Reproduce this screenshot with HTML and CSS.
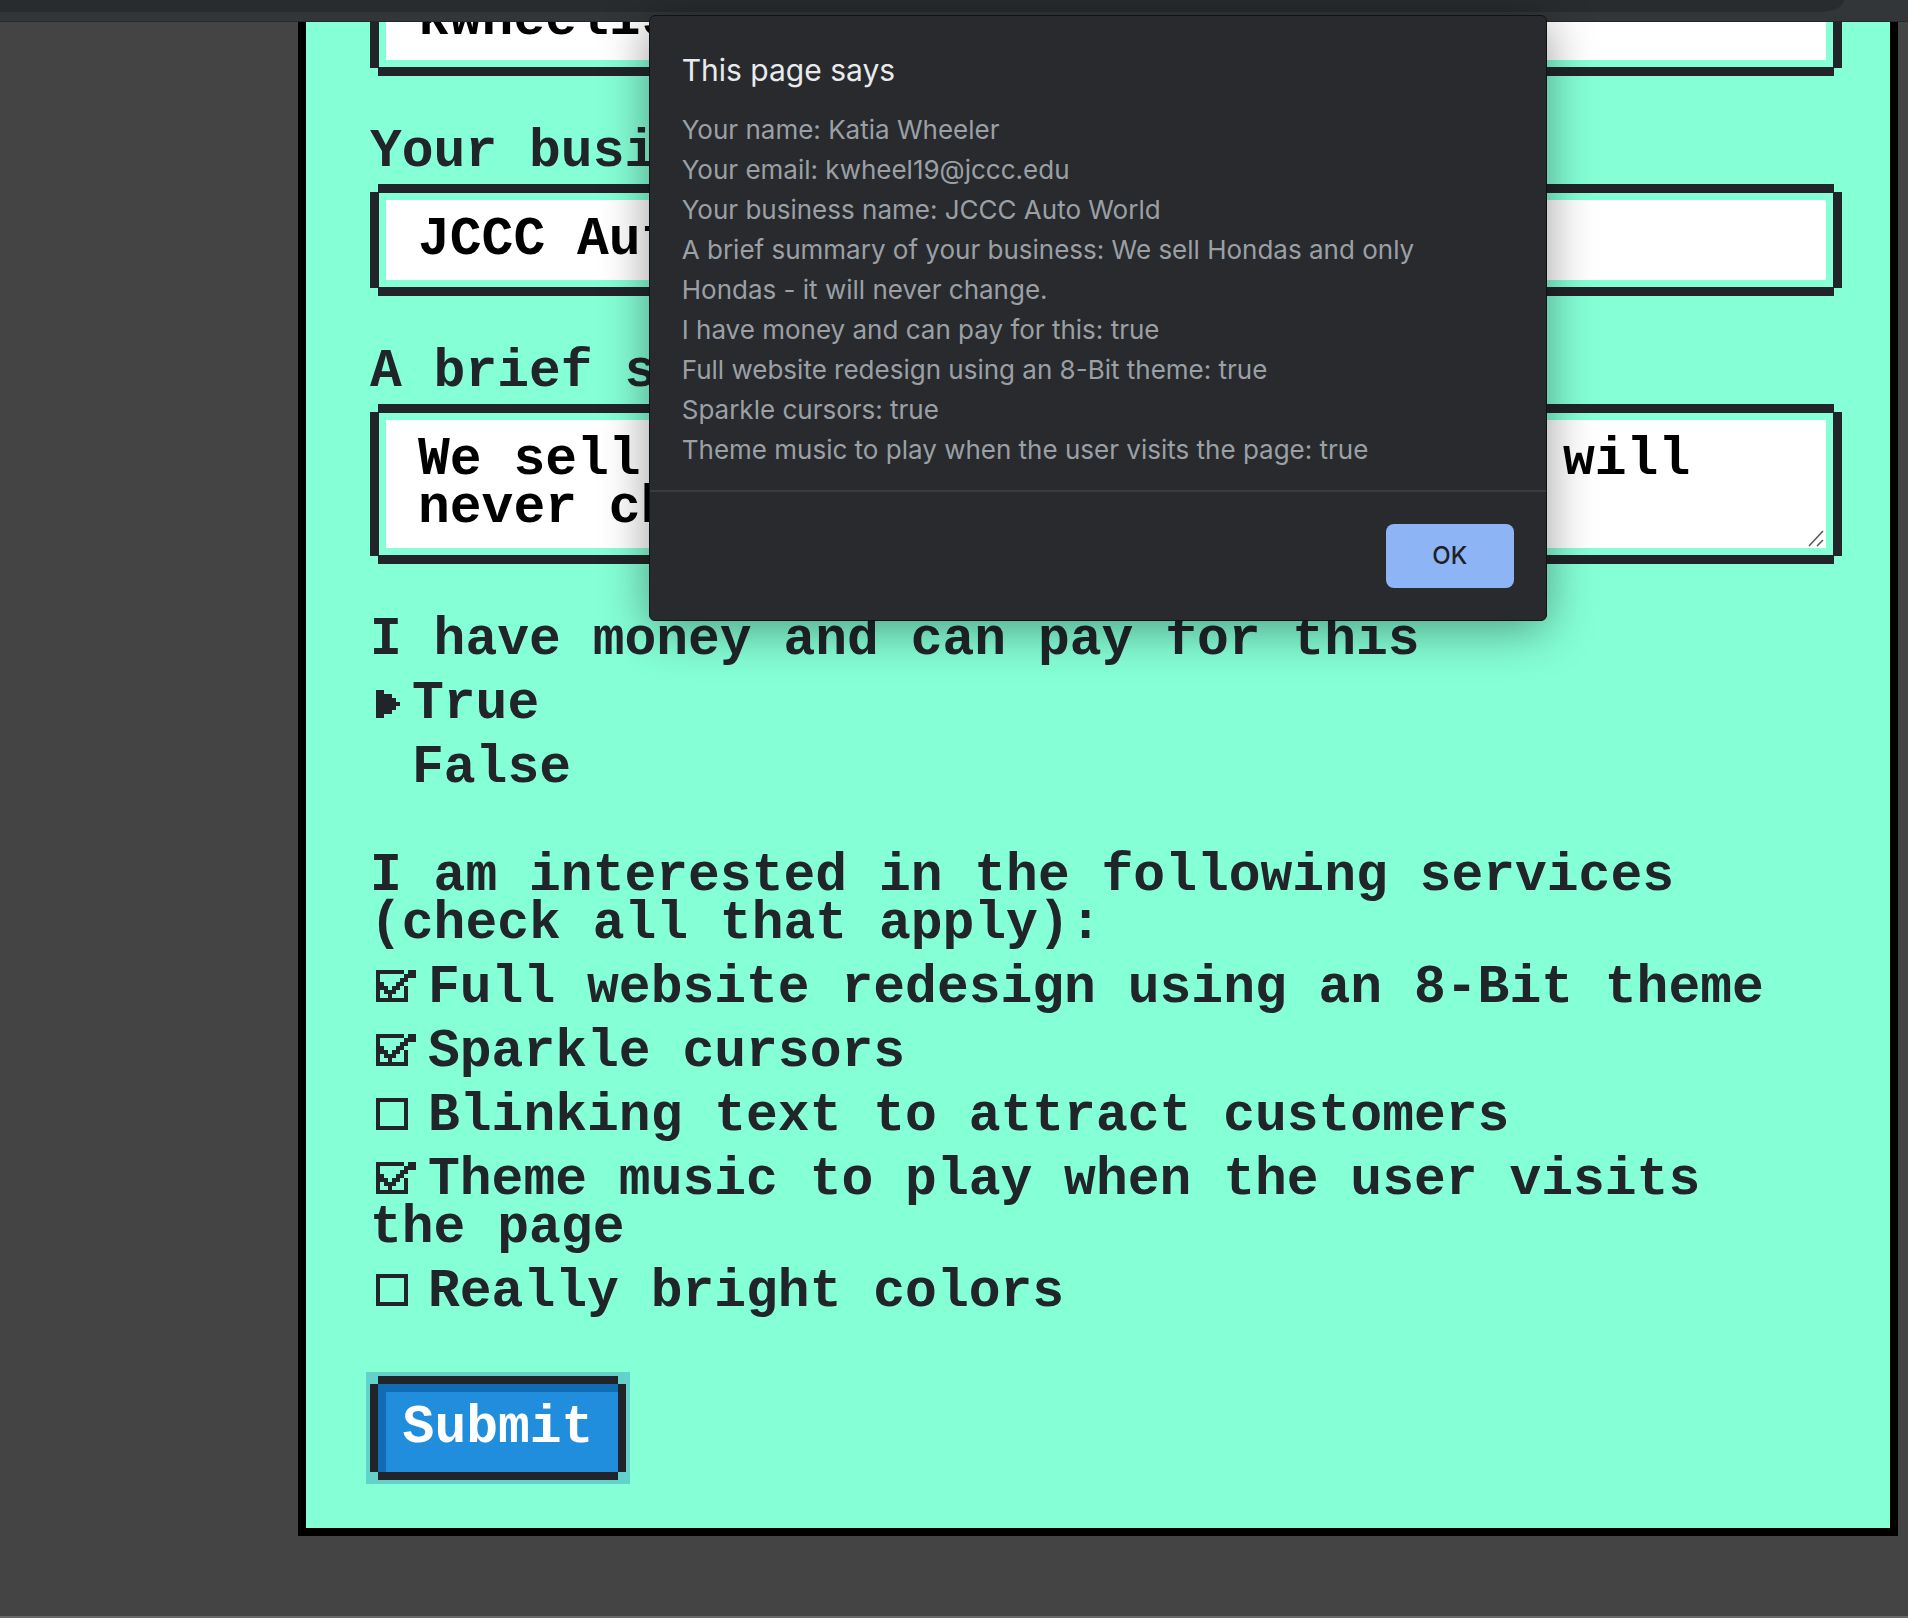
FILE: index.html
```html
<!DOCTYPE html>
<html lang="en">
<head>
<meta charset="utf-8">
<meta name="viewport" content="width=device-width, initial-scale=1">
<title>Contact</title>
<link rel="stylesheet" href="styles.css">
</head>
<body>
<header class="toolbar"><div class="address"></div></header>
<main class="viewport">
  <form class="card">
    <div class="field">
      <input class="control" id="email" type="text" aria-label="Your email" value="kwheel19@jccc.edu">
    </div>
    <div class="field">
      <label for="business">Your business name</label>
      <input class="control" id="business" type="text" value="JCCC Auto World">
    </div>
    <div class="field">
      <label for="summary">A brief summary of your business</label>
      <textarea class="control" id="summary" rows="2">We sell Hondas and only Hondas - it will never change.</textarea>
    </div>
    <fieldset class="group">
      <legend>I have money and can pay for this</legend>
      <label class="option"><input class="radio" type="radio" name="money" checked>True</label>
      <label class="option"><input class="radio" type="radio" name="money">False</label>
    </fieldset>
    <fieldset class="group">
      <legend>I am interested in the following services (check all that apply):</legend>
      <label class="option"><input class="check" type="checkbox" checked>Full website redesign using an 8-Bit theme</label>
      <label class="option"><input class="check" type="checkbox" checked>Sparkle cursors</label>
      <label class="option"><input class="check" type="checkbox">Blinking text to attract customers</label>
      <label class="option"><input class="check" type="checkbox" checked>Theme music to play when the user visits the page</label>
      <label class="option"><input class="check" type="checkbox">Really bright colors</label>
    </fieldset>
    <button class="submit" type="submit">Submit</button>
  </form>
</main>
<section class="dialog" role="alertdialog" aria-labelledby="dialog-title">
  <div class="dialog-body">
    <h1 id="dialog-title">This page says</h1>
    <p>Your name: Katia Wheeler</p>
    <p>Your email: kwheel19@jccc.edu</p>
    <p>Your business name: JCCC Auto World</p>
    <p>A brief summary of your business: We sell Hondas and only Hondas - it will never change.</p>
    <p>I have money and can pay for this: true</p>
    <p>Full website redesign using an 8-Bit theme: true</p>
    <p>Sparkle cursors: true</p>
    <p>Theme music to play when the user visits the page: true</p>
  </div>
  <div class="dialog-actions"><button class="ok" type="button">OK</button></div>
</section>
</body>
</html>
```
FILE: styles.css
```css
* { box-sizing: border-box; }

body {
  margin: 0;
  min-height: 100vh;
  display: flex;
  flex-direction: column;
  position: relative;
  background: #444;
  color: #212529;
  font: bold 53px/48px "Liberation Mono", monospace;
}

.toolbar {
  height: 22px;
  background: #323639;
  border-bottom: 1px solid #252729;
}

.address {
  height: 12px;
  margin-right: 64px;
  background: #282c2f;
  border-bottom-right-radius: 24px 12px;
}

.viewport {
  flex: 1;
  overflow: hidden;
  padding: 0 10px 80px 298px;
  border-bottom: 2px solid #6b6767;
}

/* The page is scrolled part of the way down the form. */
.card {
  margin-top: -50px;
  padding: 0 48px 48px 64px;
  border: solid #000;
  border-width: 0 8px 8px;
  background: #85ffd6;
}

.field {
  display: flex;
  flex-direction: column;
  gap: 16px;
  margin-bottom: 60px;
}

.control {
  display: block;
  height: 96px;
  margin: 0 8px;
  padding: 16px 32px;
  border: 8px solid transparent;
  background: #fff;
  background-clip: padding-box;
  box-shadow: 0 -8px #212529, 0 8px #212529, -8px 0 #212529, 8px 0 #212529;
  color: #000;
  font: inherit;
  outline: none;
}

textarea.control {
  height: 144px;
  resize: none;
  overflow: hidden;
  background-image: url('data:image/svg+xml,<svg xmlns="http://www.w3.org/2000/svg" width="18" height="18" viewBox="0 0 18 18"><path fill="none" stroke="%23555" stroke-width="1.5" d="M1 16L15 1M9 16l6-6"/></svg>');
  background-repeat: no-repeat;
  background-position: right bottom;
}

.group {
  display: flex;
  flex-direction: column;
  min-width: 0;
  margin: 0 0 60px;
  padding: 0 32px 0 0;
  border: 0;
}

legend { padding: 0; }

.option {
  display: block;
  margin-top: 16px;
}

.radio,
.check {
  appearance: none;
  display: inline-block;
  vertical-align: baseline;
  background-repeat: no-repeat;
}

.radio {
  width: 24px;
  height: 28px;
  margin: 0 12px 0 6px;
}

.radio:checked {
  background-image: url('data:image/svg+xml,<svg xmlns="http://www.w3.org/2000/svg" viewBox="0 0 6 7" shape-rendering="crispEdges"><path fill="%23212529" d="M0 0h2v1h2v1h1v1h1v1h-1v1h-1v1h-2v1h-2z"/></svg>');
}

.check {
  width: 40px;
  height: 32px;
  margin: 0 12px 0 6px;
  background-image: url('data:image/svg+xml,<svg xmlns="http://www.w3.org/2000/svg" viewBox="0 0 10 8" shape-rendering="crispEdges"><path fill="%23212529" fill-rule="evenodd" d="M0 0h8v8h-8zM1 1v6h6v-6z"/></svg>');
}

.check:checked {
  background-image: url('data:image/svg+xml,<svg xmlns="http://www.w3.org/2000/svg" viewBox="0 0 10 8" shape-rendering="crispEdges"><path fill="%23212529" d="M0 0h7v1h-7zM8 0h2v2h-2zM7 1h1v2h-1zM6 2h1v2h-1zM5 3h1v2h-1zM4 4h1v2h-1zM0 1h1v6h-1zM1 3h1v2h-1zM2 4h1v2h-1zM3 5h1v2h-1zM7 4h1v3h-1zM0 7h8v1h-8z"/></svg>');
}

.submit {
  display: block;
  min-width: 240px;
  margin: 68px 8px 8px;
  padding: 20px 24px;
  border: 0;
  background: #208ddd;
  box-shadow:
    inset 8px 8px #106db3,
    0 -8px #212529, 0 8px #212529, -8px 0 #212529, 8px 0 #212529,
    0 0 0 12px #62d2cb;
  color: #fff;
  font: inherit;
}

.dialog {
  position: absolute;
  top: 15px;
  left: 34%;
  width: 898px;
  max-width: 64%;
  border: 1px solid #111214;
  border-radius: 6px;
  background: #292a2d;
  box-shadow: 0 8px 48px rgba(0, 0, 0, 0.4);
  color: #9aa0a6;
  font: 26px/40px Inter, sans-serif;
}

.dialog-body {
  padding: 34px 32px 20px;
  border-bottom: 2px solid #3a3b3f;
}

.dialog h1 {
  margin: 0 0 20px;
  color: #e8eaed;
  font-size: 30px;
  font-weight: 400;
  line-height: 40px;
}

.dialog p {
  max-width: 750px;
  margin: 0;
}

.dialog-actions {
  display: flex;
  justify-content: flex-end;
  padding: 32px;
}

.ok {
  width: 128px;
  height: 64px;
  border: 0;
  border-radius: 8px;
  background: #8db5f6;
  color: #202124;
  font: 500 24px/40px Inter, sans-serif;
}
```
